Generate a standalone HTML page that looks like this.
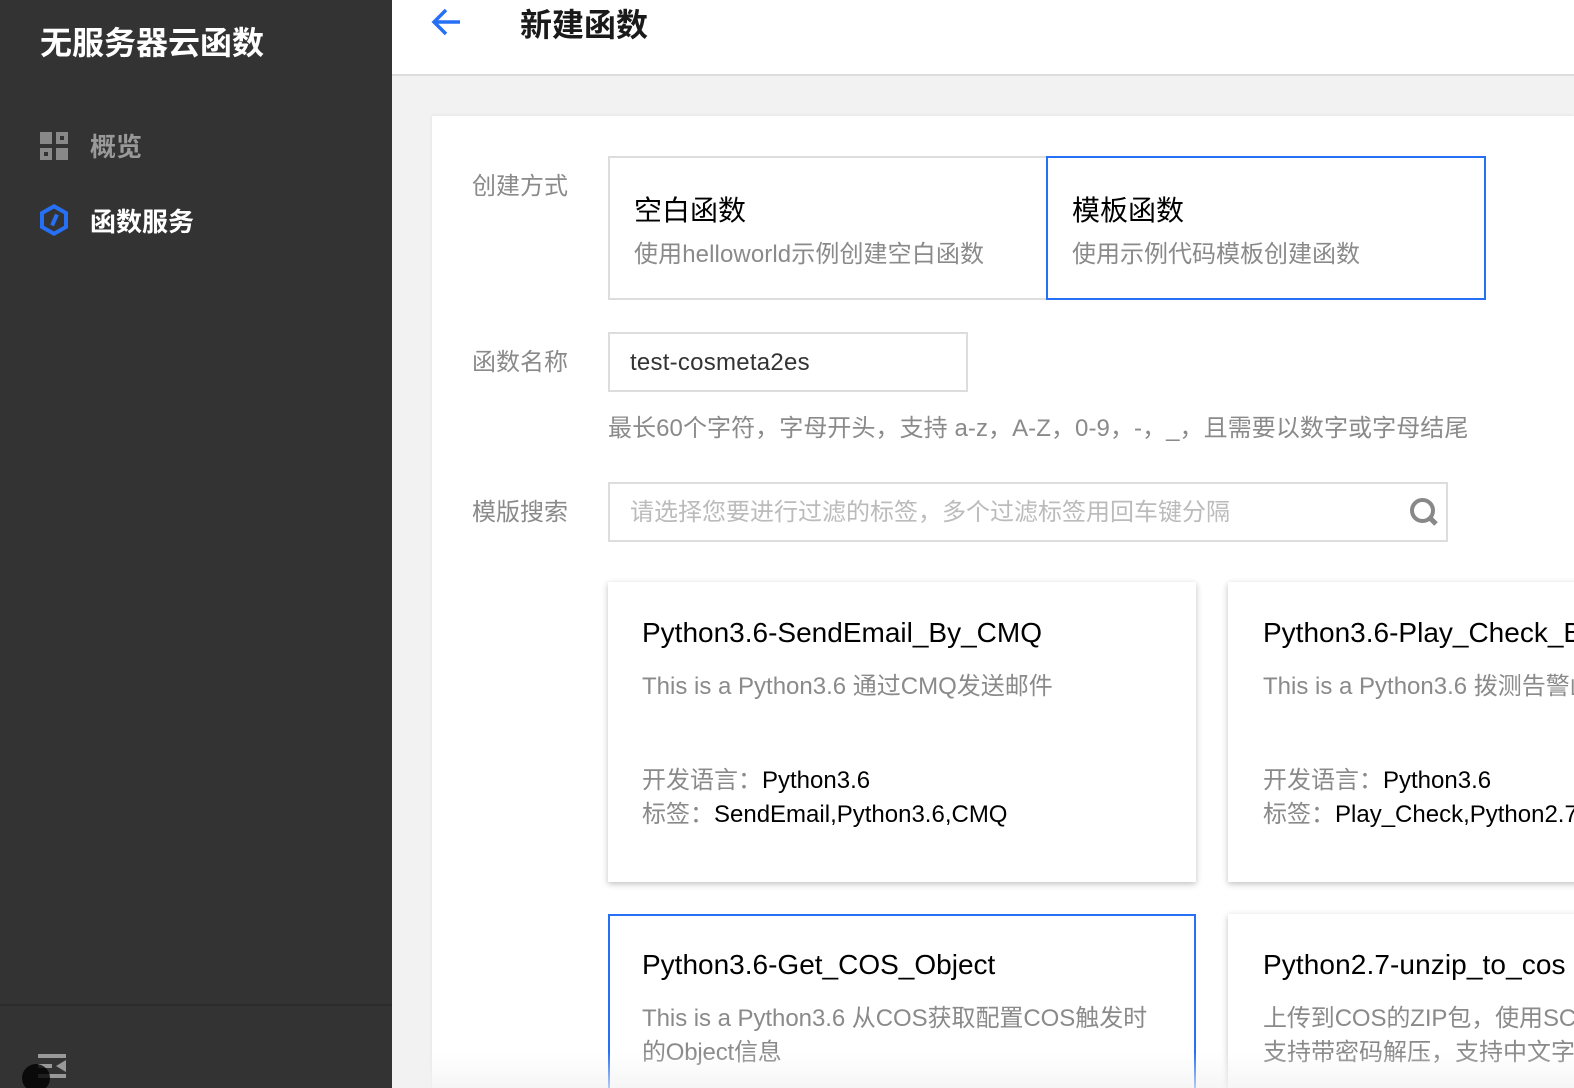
<!DOCTYPE html>
<html lang="zh"><head><meta charset="utf-8"><title>新建函数</title>
<style>
html,body{margin:0;padding:0;width:1574px;height:1088px;overflow:hidden;background:#f2f2f2}
body{position:relative;font-family:"Liberation Sans","Noto Sans CJK SC",sans-serif;}
.a{position:absolute}
.t{position:absolute;white-space:nowrap;line-height:40px;height:40px}
.g{color:#8a8a8a}
.bx{position:absolute;box-sizing:border-box;border:2px solid #ddd;background:#fff}
.bl{border-color:#2670f5}
.card{position:absolute;box-sizing:border-box;background:#fff;box-shadow:0 2px 6px rgba(0,0,0,.25)}
.f28{font-size:28px;letter-spacing:0;color:#000}
.f24{font-size:24px}
.k{color:#000}
</style></head><body>
<div class="a" style="left:0;top:0;width:392px;height:1088px;background:#333"></div>
<div class="a" style="left:0;top:1004px;width:392px;height:2px;background:#2b2b2b"></div>
<div class="t" style="left:40px;top:23px;font-size:32px;font-weight:700;color:#fff">无服务器云函数</div>
<svg class="a" style="left:40px;top:132px" width="28" height="28" viewBox="0 0 28 28"><path fill="#888" d="M0 0h12v12H0zM16 16h12v12H16z"/><path fill="#888" fill-rule="evenodd" d="M16 0h12v12H16zM20 4v4h4V4zM0 16h12v12H0zM4 20v4h4v-4z"/></svg>
<div class="t" style="left:90px;top:127px;font-size:26px;font-weight:700;color:#999">概览</div>
<svg class="a" style="left:40px;top:204px" width="28" height="32" viewBox="0 0 28 32"><path fill="none" stroke="#2670f5" stroke-width="4" d="M14 2.300 26 9v14L14 29.700 2 23V9z"/><path stroke="#2670f5" stroke-width="4" d="M17 10.500 12 21.500"/></svg>
<div class="t" style="left:90px;top:202px;font-size:26px;font-weight:700;color:#fff">函数服务</div>
<svg class="a" style="left:38px;top:1054px" width="28" height="24" viewBox="0 0 28 24"><path fill="#999" d="M0 0h28v4H0zM0 10h14v4H0zM0 20h28v4H0zM28 6v12l-10-6z"/></svg>
<div class="a" style="left:22px;top:1064px;width:28px;height:28px;border-radius:50%;background:rgba(0,0,0,.8)"></div>

<div class="a" style="left:392px;top:0;width:1182px;height:74px;background:#fff;border-bottom:2px solid #ddd"></div>
<svg class="a" style="left:431px;top:8px" width="30" height="30" viewBox="0 0 30 30"><path fill="none" stroke="#2670f5" stroke-width="3.500" d="M29 14H4M15 2 3 14l12 12"/></svg>
<div class="t" style="left:520px;top:5px;font-size:32px;font-weight:700;color:#1a1a1a">新建函数</div>

<div class="a" style="left:432px;top:116px;width:1142px;height:972px;background:#fff;box-shadow:0 0 4px rgba(0,0,0,.08)"></div>

<div class="t g" style="left:472px;top:167px;font-size:24px">创建方式</div>
<div class="bx" style="left:608px;top:156px;width:440px;height:144px"></div>
<div class="bx bl" style="left:1046px;top:156px;width:440px;height:144px"></div>
<div class="t" style="left:634px;top:191px;font-size:28px;color:#000">空白函数</div>
<div class="t g f24" style="left:634px;top:235px;letter-spacing:.1px">使用helloworld示例创建空白函数</div>
<div class="t" style="left:1072px;top:191px;font-size:28px;color:#000">模板函数</div>
<div class="t g" style="left:1072px;top:235px;font-size:24px">使用示例代码模板创建函数</div>

<div class="t g" style="left:472px;top:343px;font-size:24px">函数名称</div>
<div class="bx" style="left:608px;top:332px;width:360px;height:60px"></div>
<div class="t f24" style="left:630px;top:343px;color:#333;letter-spacing:.25px">test-cosmeta2es</div>
<div class="t g f24" style="left:608px;top:409px;letter-spacing:.07px">最长60个字符，字母开头，支持 a-z，A-Z，0-9，-，_，且需要以数字或字母结尾</div>

<div class="t g" style="left:472px;top:493px;font-size:24px">模版搜索</div>
<div class="bx" style="left:608px;top:482px;width:840px;height:60px"></div>
<div class="t f24" style="left:630px;top:493px;color:#bbb">请选择您要进行过滤的标签，多个过滤标签用回车键分隔</div>
<svg class="a" style="left:1409px;top:497px" width="32" height="32" viewBox="0 0 32 32"><circle cx="13.500" cy="13.500" r="10.500" fill="none" stroke="#888" stroke-width="4"/><path stroke="#888" stroke-width="5" d="M20 20l7 7"/></svg>

<div class="card" style="left:608px;top:582px;width:588px;height:300px"></div>
<div class="t f28" style="left:642px;top:613px">Python3.6-SendEmail_By_CMQ</div>
<div class="t g f24" style="left:642px;top:667px">This is a Python3.6 通过CMQ发送邮件</div>
<div class="t g f24" style="left:642px;top:761px">开发语言：<span class="k">Python3.6</span></div>
<div class="t g f24" style="left:642px;top:795px">标签：<span class="k">SendEmail,Python3.6,CMQ</span></div>

<div class="card" style="left:1228px;top:582px;width:400px;height:300px"></div>
<div class="t f28" style="left:1263px;top:613px">Python3.6-Play_Check_B</div>
<div class="t g f24" style="left:1263px;top:667px">This is a Python3.6 拨测告警函数</div>
<div class="t g f24" style="left:1263px;top:761px">开发语言：<span class="k">Python3.6</span></div>
<div class="t g f24" style="left:1263px;top:795px">标签：<span class="k">Play_Check,Python2.7</span></div>

<div class="card" style="left:608px;top:914px;width:588px;height:220px;border:2px solid #2670f5;box-shadow:none"></div>
<div class="t f28" style="left:642px;top:945px">Python3.6-Get_COS_Object</div>
<div class="t g f24" style="left:642px;top:999px;letter-spacing:-.05px">This is a Python3.6 从COS获取配置COS触发时</div>
<div class="t g f24" style="left:642px;top:1033px;letter-spacing:-.2px">的Object信息</div>

<div class="card" style="left:1228px;top:914px;width:400px;height:220px"></div>
<div class="t f28" style="left:1263px;top:945px;letter-spacing:.1px">Python2.7-unzip_to_cos</div>
<div class="t g f24" style="left:1263px;top:999px;letter-spacing:-.1px">上传到COS的ZIP包，使用SCF</div>
<div class="t g f24" style="left:1263px;top:1033px">支持带密码解压，支持中文字符</div>

<div class="a" style="left:392px;top:1052px;width:1182px;height:36px;background:linear-gradient(rgba(242,242,242,0),rgba(242,242,242,.7))"></div>
</body></html>
